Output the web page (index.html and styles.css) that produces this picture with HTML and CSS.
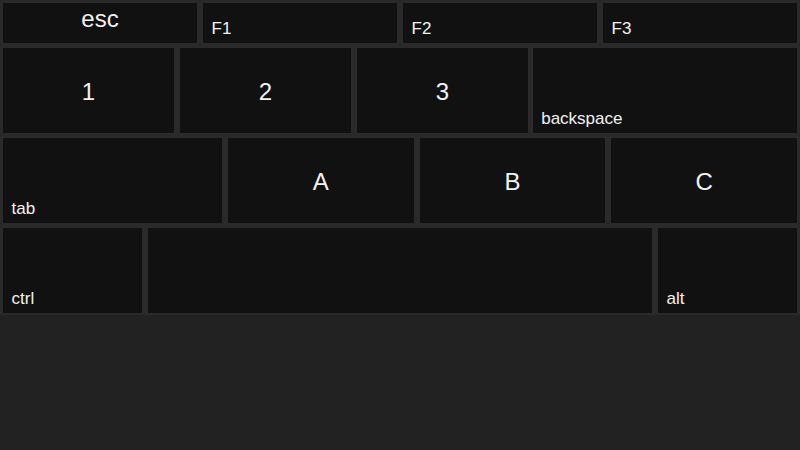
FILE: index.html
```html
<!DOCTYPE html>
<html>
<head>
<meta charset="utf-8">
<link rel="stylesheet" href="styles.css">
</head>
<body>
<div class="keyboard">
  <div class="row row-fn">
    <div class="key key-top">esc</div>
    <div class="key key-corner">F1</div>
    <div class="key key-corner">F2</div>
    <div class="key key-corner">F3</div>
  </div>
  <div class="row row-num">
    <div class="key key-center">1</div>
    <div class="key key-center">2</div>
    <div class="key key-center">3</div>
    <div class="key key-corner key-wide">backspace</div>
  </div>
  <div class="row row-alpha">
    <div class="key key-corner">tab</div>
    <div class="key key-center">A</div>
    <div class="key key-center">B</div>
    <div class="key key-center">C</div>
  </div>
  <div class="row row-mod">
    <div class="key key-corner">ctrl</div>
    <div class="key key-corner"></div>
    <div class="key key-corner">alt</div>
  </div>
</div>
</body>
</html>
```
FILE: styles.css
```css
html, body {
  margin: 0;
  padding: 0;
  background: #222222;
}

.keyboard {
  width: 800px;
  background: #2a2a2a;
  font-family: "Liberation Sans", Arial, sans-serif;
  color: #f2f2f2;
}

.row {
  display: grid;
}

.row-fn {
  grid-template-columns: 1fr 1fr 1fr 1fr;
  height: 45px;
}

.row-num {
  grid-template-columns: 177px 176.7px 177.3px 1fr;
  height: 90px;
}

.row-alpha {
  grid-template-columns: 225px 1fr 1fr 1fr;
  height: 90px;
}

.row-mod {
  grid-template-columns: 145px 1fr 145px;
  height: 90px;
}

.key {
  margin: 2.5px 3px;
  background: #111111;
  display: flex;
  box-sizing: border-box;
  min-width: 0;
}

.key-wide {
  margin-left: 1.7px;
}

.key-center {
  align-items: center;
  justify-content: center;
  font-size: 24px;
  padding-top: 3px;
}

.key-top {
  align-items: flex-start;
  justify-content: center;
  font-size: 24px;
  padding-top: 2.5px;
}

.key-corner {
  align-items: flex-end;
  justify-content: flex-start;
  font-size: 17px;
  padding: 0 8px 3.5px 8.5px;
}
```
